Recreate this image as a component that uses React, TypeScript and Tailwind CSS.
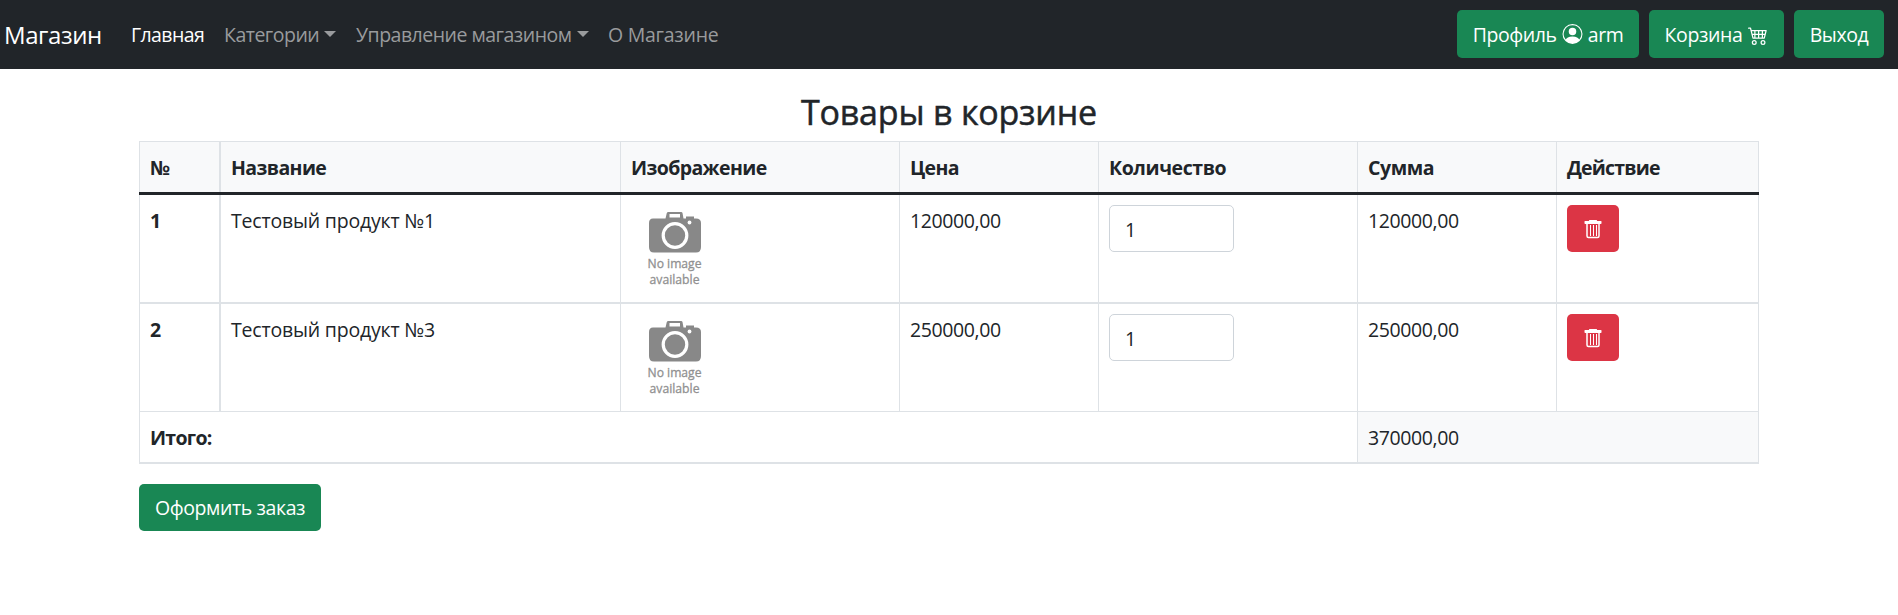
import { BsCart4, BsPersonCircle } from "react-icons/bs";

const cell = "border-r border-[#dee2e6] px-[10px]";

const items = [
  { id: 1, name: "Тестовый продукт №1", price: "120000,00", last: false },
  { id: 2, name: "Тестовый продукт №3", price: "250000,00", last: true },
];

function Caret() {
  return (
    <span className="mb-[2px] ml-[5px] border-x-[6px] border-t-[6px] border-x-transparent border-t-current" />
  );
}

function Trash() {
  return (
    <svg viewBox="0 0 18 20" className="h-5 w-[18px]" fill="none" stroke="currentColor">
      <path fill="currentColor" stroke="none" d="M1 2 H5 V1.500 Q5 1 5.500 1 H12.500 Q13 1 13 1.500 V2 H17 Q17.500 2 17.500 2.500 V4.300 Q17.500 5 16.800 5 H1.200 Q0.500 5 0.500 4.300 V2.500 Q0.500 2 1 2 Z" />
      <path strokeWidth="1.500" d="M3 5 V17 Q3 18.500 4.500 18.500 H13.500 Q15 18.500 15 17 V5" />
      <path d="M6.500 6 V17 M9.500 6 V17 M12.500 6 V17" />
    </svg>
  );
}

function NoImage() {
  return (
    <svg viewBox="0 0 90 90" className="h-[90px] w-[90px]">
      <path
        fill="#888"
        fillRule="evenodd"
        d="M22 12.500 Q18 12.500 18 17 V41 Q18 46.500 23 46.500 H65 Q70 46.500 70 41 V17 Q70 12.500 65 12.500 H63 V10.500 H55 V12.500 H52.500 L51.500 7 Q51.300 6 50 6 H37.500 Q36 6 35.800 7 L34.500 12.500 Z M38.500 8 H49 V11.500 H38.500 Z"
      />
      <circle cx="44" cy="29.500" r="11.800" fill="#888" stroke="#fff" strokeWidth="3.200" />
      <circle cx="58.500" cy="16.500" r="1.900" fill="#fff" />
      <g fill="#909090" stroke="#909090" strokeWidth="0.300" fontSize="13" textAnchor="middle">
        <text x="43.500" y="62" textLength="54" lengthAdjust="spacingAndGlyphs">No image</text>
        <text x="43.500" y="78" textLength="50" lengthAdjust="spacingAndGlyphs">available</text>
      </g>
    </svg>
  );
}

export default function App() {
  return (
    <div className="min-h-[615px] bg-white font-['Open_Sans','Noto_Sans',sans-serif] text-[19.5px] leading-[30px] tracking-[-0.4px] text-[#212529]">
      <nav className="flex h-[69px] items-center justify-between bg-[#212529] pr-[14px] pl-1 whitespace-nowrap">
        <div className="flex items-center text-[#999b9d]">
          <span className="w-[127px] text-[24px] text-white">Магазин</span>
          <span className="w-[93px] tracking-[-0.6px] text-white">Главная</span>
          <span className="flex w-[132px] items-center tracking-[-0.5px]">Категории<Caret /></span>
          <span className="flex w-[252px] items-center tracking-[-0.5px]">Управление магазином<Caret /></span>
          <span className="tracking-[-0.25px]">О Магазине</span>
        </div>
        <div className="mb-px flex gap-[10px] text-white">
          <button className="flex h-12 w-[182px] items-center justify-center gap-[5px] rounded-[5px] bg-[#198754] pt-[2px]">
            Профиль <BsPersonCircle className="mb-[2px] h-5 w-[21px]" /> arm
          </button>
          <button className="flex h-12 w-[135px] items-center justify-center gap-[6px] rounded-[5px] bg-[#198754] pt-[2px]">
            Корзина <BsCart4 className="h-5 w-5" />
          </button>
          <button className="h-12 w-[90px] rounded-[5px] bg-[#198754] pt-[2px]">Выход</button>
        </div>
      </nav>
      <main className="mx-[139px] pt-5">
        <h1 className="mb-[6px] text-center text-[34px] leading-[46px] font-medium tracking-[-0.2px] [-webkit-text-stroke:0.5px_#212529]">Товары в корзине</h1>
        <section className="grid grid-cols-[82px_400px_279px_199px_259px_199px_202px]">
          <div className="col-span-7 grid h-[54px] grid-cols-subgrid border-t border-b-[3px] border-t-[#dee2e6] border-b-[#212529] bg-[#f8f9fa] font-bold leading-[52px] tracking-[-0.6px]">
            <div className={`${cell} h-[50px] border-r-2 border-l`}>№</div>
            <div className={`${cell} h-[50px]`}>Название</div>
            <div className={`${cell} h-[50px]`}>Изображение</div>
            <div className={`${cell} h-[50px]`}>Цена</div>
            <div className={`${cell} h-[50px] tracking-[-0.4px]`}>Количество</div>
            <div className={`${cell} h-[50px] tracking-[-0.4px]`}>Сумма</div>
            <div className={`${cell} h-[50px] tracking-[-0.8px]`}>Действие</div>
          </div>
          {items.map((item) => (
            <div
              key={item.id}
              className={`col-span-7 grid grid-cols-subgrid border-[#dee2e6] ${item.last ? "h-[108px] border-b" : "h-[109px] border-b-2"}`}
            >
              <div className={`${cell} border-r-2 border-l pt-[11px] font-bold`}>{item.id}</div>
              <div className={`${cell} pt-[11px] tracking-[-0.2px]`}>{item.name}</div>
              <div className={`${cell} pt-[11px] tracking-normal`}><NoImage /></div>
              <div className={`${cell} pt-[11px]`}>{item.price}</div>
              <div className={`${cell} pt-[10px]`}>
                <input
                  defaultValue="1"
                  className="block h-[47px] w-[125px] rounded-[5px] border border-[#ced4da] px-[15px] pt-[2px]"
                />
              </div>
              <div className={`${cell} pt-[11px]`}>{item.price}</div>
              <div className={`${cell} pt-[10px]`}>
                <button className="flex h-[47px] w-[52px] items-center justify-center rounded-[5px] bg-[#dc3545] text-white">
                  <Trash />
                </button>
              </div>
            </div>
          ))}
          <div className="col-span-7 grid h-[52px] grid-cols-subgrid border-b-2 border-[#dee2e6] leading-[51px]">
            <div className={`${cell} h-[50px] col-span-5 border-l font-bold tracking-[-0.7px]`}>Итого:</div>
            <div className={`${cell} h-[50px] col-span-2 bg-[#f8f9fa]`}>370000,00</div>
          </div>
        </section>
        <button className="mt-5 h-[47px] w-[182px] rounded-[5px] bg-[#198754] pt-px text-white">Оформить заказ</button>
      </main>
    </div>
  );
}
